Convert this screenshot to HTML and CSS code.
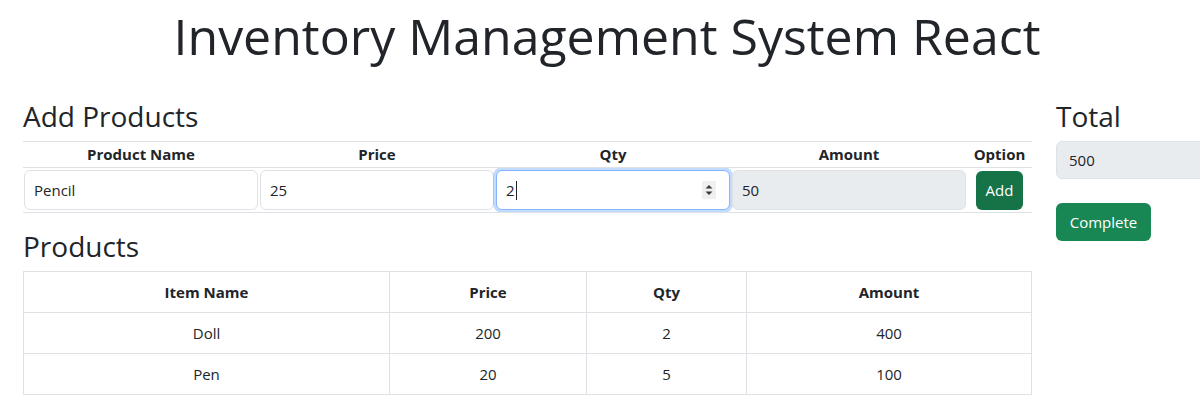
FILE: index.html
```html
<!DOCTYPE html>
<html lang="en">
<head>
    <meta charset="UTF-8">
    <meta name="viewport" content="width=device-width, initial-scale=1.0">
    <title>Inventory Management System React</title>
    <link rel="stylesheet" href="styles.css">
</head>
<body>

<h1 class="pageTitle">Inventory Management System React</h1>

<div class="mainRow">
    <div class="leftCol">
        <h2 class="sectionTitle">Add Products</h2>
        <table class="addTable">
            <colgroup>
                <col class="wideCol">
                <col class="wideCol">
                <col class="wideCol">
                <col class="wideCol">
                <col class="optionCol">
            </colgroup>
            <thead>
                <tr>
                    <th>Product Name</th>
                    <th>Price</th>
                    <th>Qty</th>
                    <th>Amount</th>
                    <th>Option</th>
                </tr>
            </thead>
            <tbody>
                <tr>
                    <td><input type="text" class="field" value="Pencil"></td>
                    <td><input type="text" class="field" value="25"></td>
                    <td>
                        <div class="field qtyField">
                            <span>2</span>
                            <span class="caret"></span>
                            <span class="spinner">
                                <svg width="10" height="16" viewBox="0 0 10 16">
                                    <path d="M1.5 6.5 L5 3 L8.5 6.5 Z" fill="#3a3a3a"/>
                                    <path d="M1.5 9.5 L5 13 L8.5 9.5 Z" fill="#3a3a3a"/>
                                </svg>
                            </span>
                        </div>
                    </td>
                    <td><input type="text" class="field disabledField" value="50" disabled></td>
                    <td class="optionCell"><button class="greenBtn addBtn">Add</button></td>
                </tr>
            </tbody>
        </table>

        <h2 class="sectionTitle productsTitle">Products</h2>
        <table class="productTable">
            <colgroup>
                <col class="nameCol">
                <col class="priceCol">
                <col class="qtyCol">
                <col class="amountCol">
            </colgroup>
            <thead>
                <tr>
                    <th>Item Name</th>
                    <th>Price</th>
                    <th>Qty</th>
                    <th>Amount</th>
                </tr>
            </thead>
            <tbody>
                <tr>
                    <td>Doll</td>
                    <td>200</td>
                    <td>2</td>
                    <td>400</td>
                </tr>
                <tr>
                    <td>Pen</td>
                    <td>20</td>
                    <td>5</td>
                    <td>100</td>
                </tr>
            </tbody>
        </table>
    </div>

    <div class="rightCol">
        <h2 class="sectionTitle">Total</h2>
        <input type="text" class="field disabledField totalField" value="500" disabled>
        <button class="greenBtn completeBtn">Complete</button>
    </div>
</div>

</body>
</html>
```

FILE: styles.css
```css
html, body {
    overflow: hidden;
}
body {
    margin: 0;
    font-family: "Open Sans", "Noto Sans", sans-serif;
    font-size: 15px;
    line-height: 1.5;
    color: #212529;
    background: #fff;
}
.pageTitle {
    margin: 6px 0 0 14px;
    font-size: 50px;
    font-weight: 500;
    line-height: 1.2;
    text-align: center;
}
.mainRow {
    display: flex;
    gap: 24px;
    padding-left: 23px;
    margin-top: 34px;
}
.leftCol {
    width: 1009px;
    flex-shrink: 0;
}
.rightCol {
    width: 170px;
    flex-shrink: 0;
}
.sectionTitle {
    margin: 0 0 7px;
    font-size: 28px;
    font-weight: 500;
    line-height: 1.2;
}
.productsTitle {
    margin-top: 17px;
}
table {
    border-collapse: collapse;
    width: 100%;
    table-layout: fixed;
}
.wideCol {
    width: 236px;
}
.optionCol {
    width: 65px;
}
.addTable {
    border-top: 1px solid #dee2e6;
}
.addTable tr {
    border-bottom: 1px solid #dee2e6;
}
.addTable th {
    padding: 1px 2px 2px;
    font-weight: 700;
}
.addTable td {
    padding: 2px 1px;
}
.field {
    box-sizing: border-box;
    display: block;
    width: 100%;
    height: 40px;
    padding: 0 9px;
    font-family: inherit;
    font-size: 15px;
    color: #212529;
    background: #fff;
    border: 1px solid #dee2e6;
    border-radius: 6px;
}
.qtyField {
    display: flex;
    align-items: center;
    border-color: #86b7fe;
    box-shadow: 0 0 0 3px rgba(13, 110, 253, 0.25);
}
.caret {
    width: 1px;
    height: 19px;
    margin-left: 1px;
    background: #212529;
}
.spinner {
    display: flex;
    align-items: center;
    margin-left: auto;
    margin-right: 4px;
    padding: 1px 2px;
    background: #f0f0f0;
}
.spinner svg {
    display: block;
}
.disabledField {
    background: #e9ecef;
}
.optionCell {
    text-align: center;
}
.greenBtn {
    font-family: inherit;
    font-size: 15px;
    color: #fff;
    border: none;
    border-radius: 6px;
    cursor: pointer;
}
.addBtn {
    width: 47px;
    height: 39px;
    padding: 0;
    background-color: #157347;
}
.totalField {
    height: 38px;
    width: 200px;
    padding: 0 12px;
}
.completeBtn {
    margin-top: 24px;
    width: 95px;
    height: 38px;
    padding: 0;
    background-color: #198754;
}
.nameCol {
    width: 366px;
}
.priceCol {
    width: 197px;
}
.qtyCol {
    width: 160px;
}
.amountCol {
    width: 285px;
}
.productTable th,
.productTable td {
    border: 1px solid #dee2e6;
    padding: 8px;
    line-height: 24px;
    text-align: center;
}
.productTable th {
    font-weight: 700;
}
```
